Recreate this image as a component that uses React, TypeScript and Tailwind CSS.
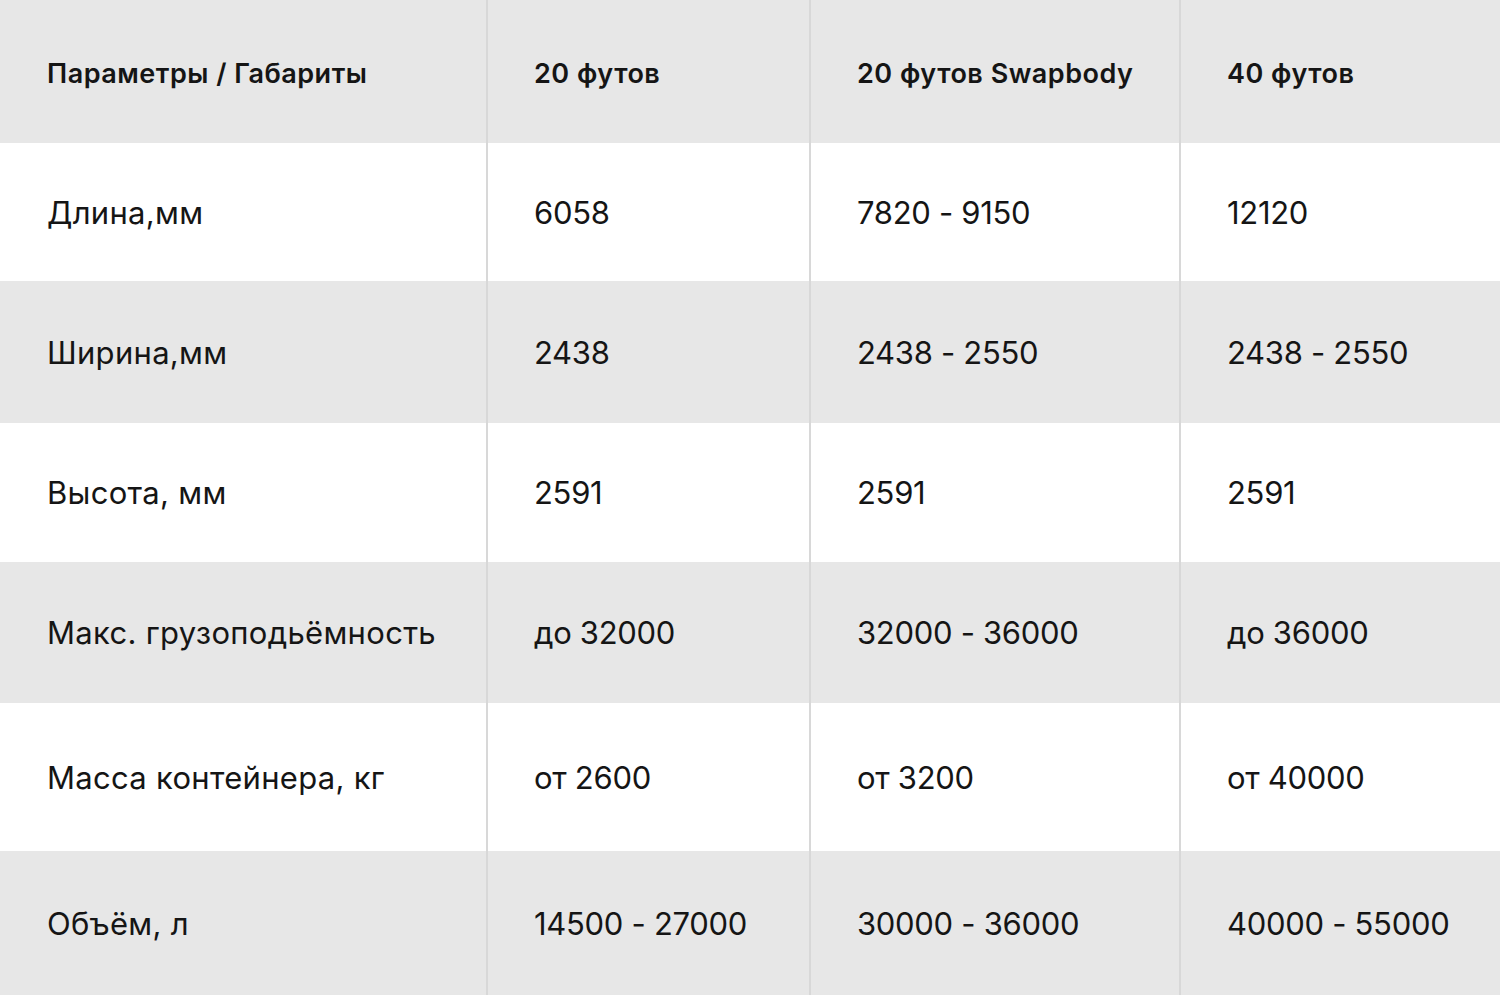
const rows: { label: string; values: string[]; h: string; gray: boolean }[] = [
  { label: "Длина,мм", values: ["6058", "7820 - 9150", "12120"], h: "h-[138px]", gray: false },
  { label: "Ширина,мм", values: ["2438", "2438 - 2550", "2438 - 2550"], h: "h-[142px]", gray: true },
  { label: "Высота, мм", values: ["2591", "2591", "2591"], h: "h-[139px]", gray: false },
  { label: "Макс. грузоподьёмность", values: ["до 32000", "32000 - 36000", "до 36000"], h: "h-[141px]", gray: true },
  { label: "Масса контейнера, кг", values: ["от 2600", "от 3200", "от 40000"], h: "h-[148px]", gray: false },
  { label: "Объём, л", values: ["14500 - 27000", "30000 - 36000", "40000 - 55000"], h: "h-[144px]", gray: true },
];

const headers = ["Параметры / Габариты", "20 футов", "20 футов Swapbody", "40 футов"];

export default function App() {
  return (
    <div
      className="w-[1500px] h-[995px] bg-white text-[#151515] overflow-hidden"
      style={{ fontFamily: "Inter, 'Noto Sans', sans-serif" }}
    >
      <div className="grid grid-cols-[486px_323px_370px_321px]">
        {headers.map((h, i) => (
          <div
            key={h}
            className={
              "h-[143px] flex items-center pt-[6px] bg-[#e7e7e7] text-[27px] font-semibold tracking-[0.5px] " +
              (i === 0 ? "pl-[47px]" : "pl-[46px] border-l-2 border-[#d8d8d8]")
            }
          >
            {h}
          </div>
        ))}
        {rows.map((r) => (
          <>
            <div
              key={r.label}
              className={
                r.h +
                " flex items-center pt-[2px] pl-[47px] text-[31px] tracking-[0.3px] " +
                (r.gray ? "bg-[#e7e7e7]" : "bg-white")
              }
            >
              {r.label}
            </div>
            {r.values.map((v, j) => (
              <div
                key={r.label + j}
                className={
                  r.h +
                  " flex items-center pt-[2px] pl-[46px] text-[31px] tracking-[-0.3px] border-l-2 border-[#d8d8d8] " +
                  (r.gray ? "bg-[#e7e7e7]" : "bg-white")
                }
              >
                {v}
              </div>
            ))}
          </>
        ))}
      </div>
    </div>
  );
}
